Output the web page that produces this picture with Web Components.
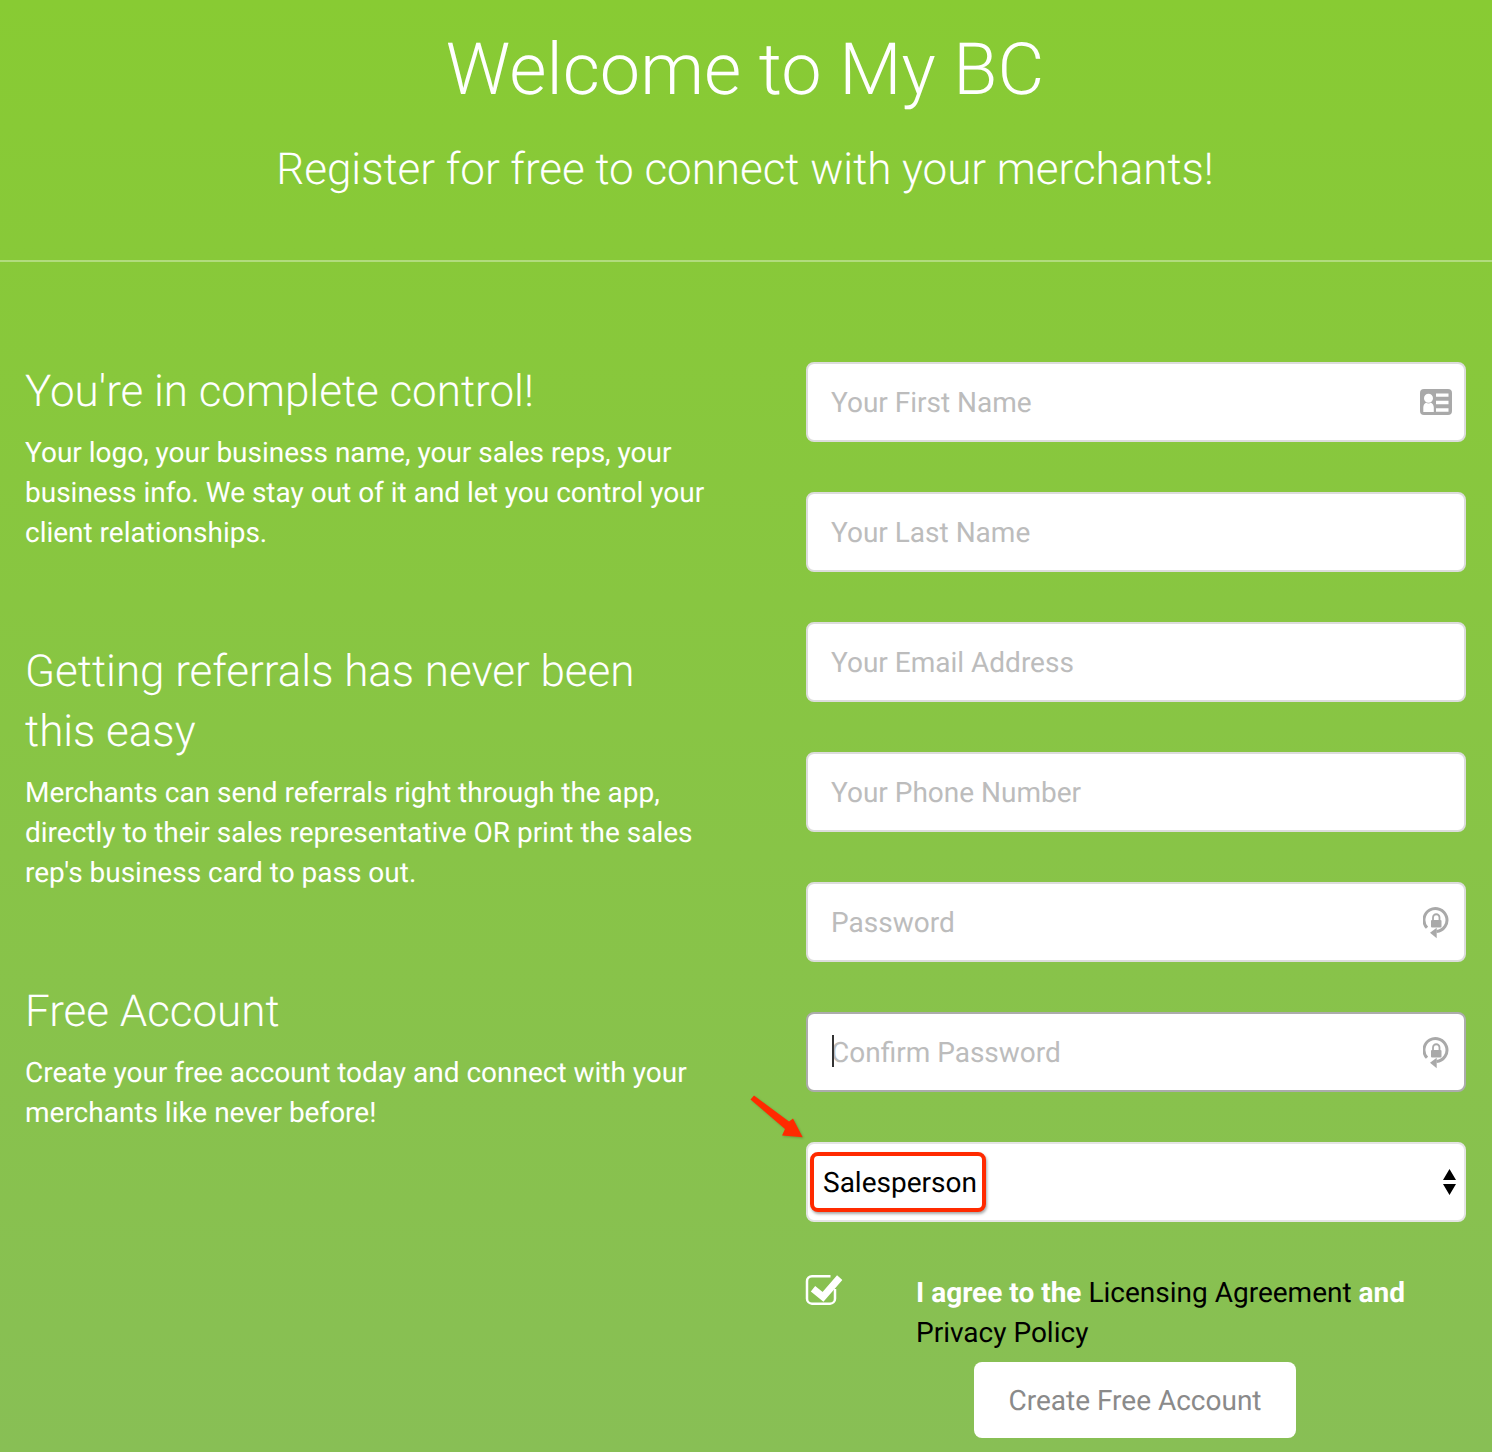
<!DOCTYPE html>
<html lang="en"><head><meta charset="utf-8"><title>Welcome to My BC</title>
<style>
html,body{margin:0;padding:0}
body{width:1492px;height:1452px;overflow:hidden;font-family:Roboto,"Liberation Sans",sans-serif;text-rendering:geometricPrecision}
</style></head><body>
<signup-page>
  <page-header slot="header" title-text="Welcome to My BC" sub-text="Register for free to connect with your merchants!"></page-header>
  <feature-block slot="left" heading="You're in complete control!">Your logo, your business name, your sales reps, your business info. We stay out of it and let you control your client relationships.</feature-block>
  <feature-block slot="left" heading="Getting referrals has never been this easy">Merchants can send referrals right through the app, directly to their sales representative OR print the sales rep's business card to pass out.</feature-block>
  <feature-block slot="left" heading="Free Account">Create your free account today and connect with your merchants like never before!</feature-block>
  <form-field slot="right" placeholder="Your First Name" icon="card"></form-field>
  <form-field slot="right" placeholder="Your Last Name"></form-field>
  <form-field slot="right" placeholder="Your Email Address"></form-field>
  <form-field slot="right" placeholder="Your Phone Number"></form-field>
  <form-field slot="right" placeholder="Password" icon="lock"></form-field>
  <form-field slot="right" placeholder="Confirm Password" icon="lock" focused></form-field>
  <role-select slot="right" value="Salesperson"></role-select>
  <agree-row slot="right"></agree-row>
  <cta-button slot="right">Create Free Account</cta-button>
</signup-page>
<script>
function def(name, html){
  customElements.define(name, class extends HTMLElement{
    constructor(){super();this.attachShadow({mode:'open'});}
    connectedCallback(){this.shadowRoot.innerHTML=typeof html==='function'?html(this):html;}
  });
}
def('signup-page',`<style>
:host{display:block;position:relative;width:1492px;height:1452px;overflow:hidden;color:#fff;
background:linear-gradient(180deg,#88cb33 0%,#88bf55 100%)}
.main{display:grid;grid-template-columns:806px 660px;padding-top:100px}
.left{margin-top:-1px;padding:0 0 0 25px;display:flex;flex-direction:column;gap:88px;box-sizing:border-box;width:710px}
.right{display:flex;flex-direction:column}
svg{position:absolute;left:748px;top:1092px;filter:drop-shadow(1px 1px 1px rgba(0,0,0,.2))}
</style>
<slot name="header"></slot>
<div class="main"><div class="left"><slot name="left"></slot></div><div class="right"><slot name="right"></slot></div></div>
<svg width="60" height="50" viewBox="0 0 60 50"><path d="M2.500 7.500L6 3.500 41 29.500 45 26.500 54.700 45.300 34 43.500 37 37Z" fill="#ff2a00"/></svg>`);
def('page-header',e=>`<style>
:host{display:block;height:260px;border-bottom:2px solid rgba(255,255,255,.35);text-align:center;box-sizing:content-box;font-weight:300}
h1{margin:0;padding-top:26px;font:300 72px/88px Roboto,sans-serif;padding-right:2px}
p{margin:0;padding-top:25px;font:300 44px/60px Roboto,sans-serif;letter-spacing:-.04px;padding-right:2px}
</style><h1>${e.getAttribute('title-text')}</h1><p>${e.getAttribute('sub-text')}</p>`);
def('feature-block',e=>`<style>
:host{display:block}
h2{margin:0 0 12px;font:300 44px/60px Roboto,sans-serif;letter-spacing:-.03px}
p{margin:0;font:400 28px/40px Roboto,sans-serif;letter-spacing:-.01px}
</style><h2>${e.getAttribute('heading')}</h2><p><slot></slot></p>`);
const icons={
card:`<svg style="margin-right:-1px" width="32" height="28" viewBox="1 0 32 28"><path fill="#a9a9a9" fill-rule="evenodd" d="M5 1h24a4 4 0 0 1 4 4v18a4 4 0 0 1-4 4H5a4 4 0 0 1-4-4V5a4 4 0 0 1 4-4zM9.500 5.800a4.500 4.500 0 1 0 0 9 4.500 4.500 0 0 0 0-9zM4.300 24h10.500v-4.500c0-2-1.200-4-2.800-4.700-1.500.8-3.500.8-5 0-1.600.7-2.700 2.700-2.700 4.700zM17 5.500v3.300h12.500V5.500zM17 12.700v3.600h12.500v-3.600zM17 20.300v3.500h12.500v-3.500z"/></svg>`,
lock:`<svg style="position:relative;top:1px" width="28" height="34" viewBox="0 0 28 34"><path fill="none" stroke="#a9a9a9" stroke-width="3" d="M13.500 25.460A11.500 11.500 0 1 0 4 21.800"/><path fill="#a9a9a9" d="M7 26.700l6.700-5v10.600z"/><path fill="none" stroke="#a9a9a9" stroke-width="1.800" d="M10 14.500v-3a3.250 3.250 0 0 1 6.500 0v3"/><rect x="8" y="14" width="10.500" height="7.500" rx="1" fill="#a9a9a9"/></svg>`};
def('form-field',e=>{const f=e.hasAttribute('focused'),ic=e.getAttribute('icon');return `<style>
:host{display:block;height:80px;margin-bottom:50px}
.box{height:80px;box-sizing:border-box;background:#fff;border:2px solid ${f?'#acacac':'#dcdcdc'};border-radius:8px;display:flex;align-items:center;padding:0 13px 0 23px;justify-content:space-between;font:400 28px/40px Roboto,sans-serif;color:#bcbcbc}
.t{position:relative;top:1px}
.caret{position:absolute;left:1px;top:2px;width:2px;height:32px;background:#333}
svg{display:block}
</style><div class="box"><span class="t">${f?'<i class="caret"></i>':''}${e.getAttribute('placeholder')}</span>${ic?icons[ic]:''}</div>`});
def('role-select',e=>`<style>
:host{display:block;height:80px;margin-bottom:50px}
.box{height:80px;box-sizing:border-box;background:#fff;border:2px solid #e4e4e4;border-radius:8px;display:flex;align-items:center;justify-content:space-between;padding:0 8px 0 2px}
.v{box-sizing:border-box;width:176px;height:60px;border:4px solid #ff2a00;border-radius:8px;box-shadow:1px 2px 3px rgba(0,0,0,.35);display:flex;align-items:center;padding:2px 0 0 9px;font:400 28px/40px Roboto,sans-serif;color:#000;background:#fff}
svg{display:block}
</style><div class="box"><span class="v">${e.getAttribute('value')}</span><svg width="13" height="26" viewBox="0 0 13 26"><path d="M6.500 0L13 11H0zM0 15h13L6.500 26z"/></svg></div>`);
def('agree-row',`<style>
:host{display:flex;height:90px;box-sizing:border-box;font:400 28px/40px Roboto,sans-serif}
.c{width:110px;flex:none;padding-top:1px}
p{margin:0;padding-top:1px;color:#000;width:520px}
b{color:#fff;font-weight:700}
svg{display:block;overflow:visible}
</style><div class="c"><svg width="38" height="34" viewBox="0 0 38 34"><path d="M24.500 3.200H6a5 5 0 0 0-5 5v17.500a5 5 0 0 0 5 5h18a5 5 0 0 0 5-5V16" fill="none" stroke="#fff" stroke-width="2.500"/><path d="M7 15.800L17 23.800 33.700 4.600" fill="none" stroke="#fff" stroke-width="7"/></svg></div><p><b>I agree to the</b> Licensing Agreement <b>and</b> Privacy Policy</p>`);
def('cta-button',`<style>
:host{display:block;align-self:center;margin-right:2px}
div{box-sizing:border-box;width:322px;height:76px;background:#fff;border-radius:8px;color:#8a8a8a;font:400 28px/78px Roboto,sans-serif;text-align:center}
</style><div><slot></slot></div>`);
</script>
</body></html>
